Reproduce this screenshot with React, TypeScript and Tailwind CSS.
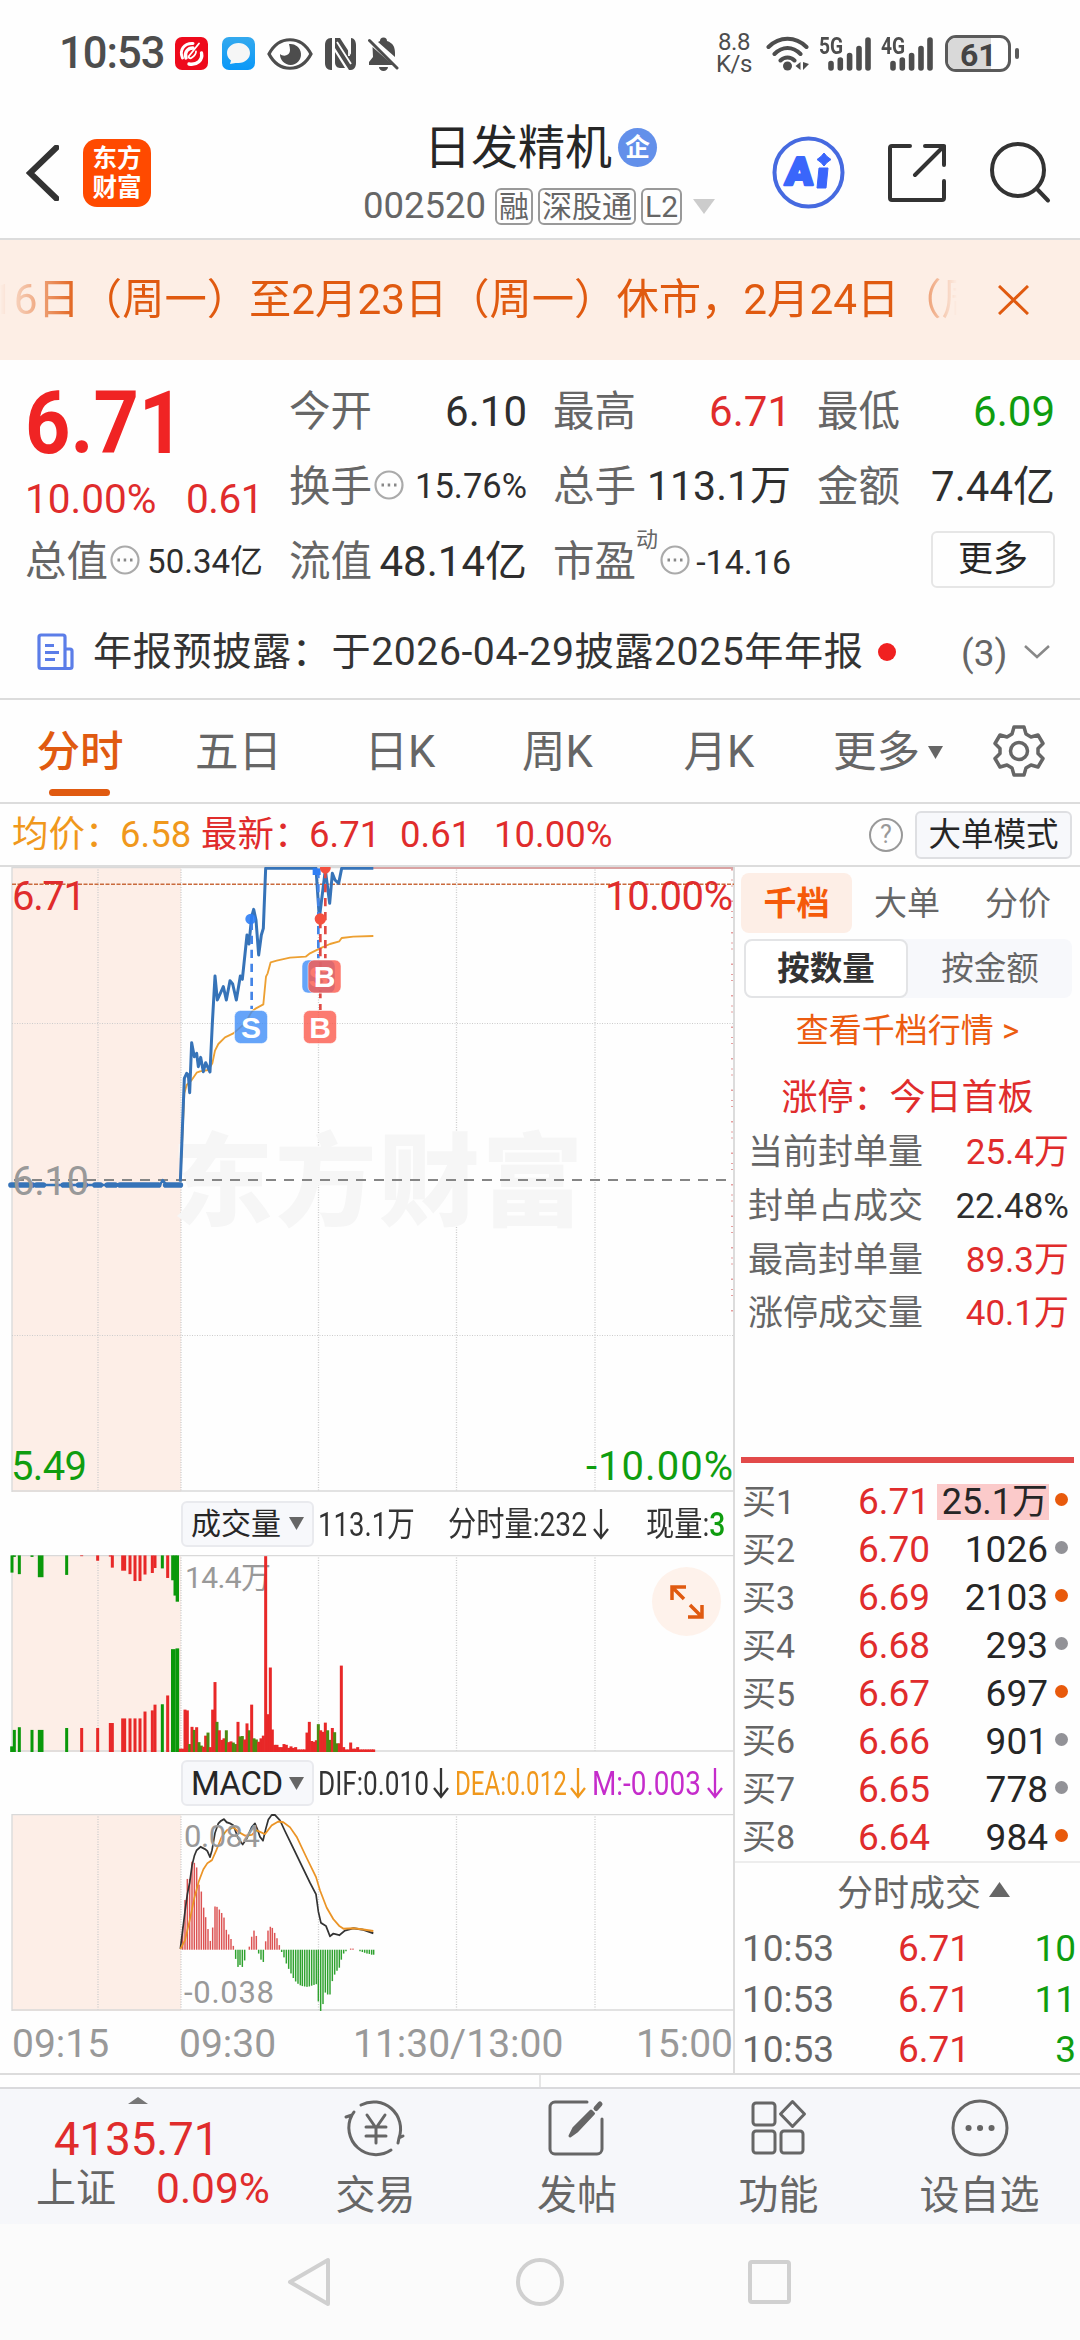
import React, { useState } from 'react';
import clsx from 'clsx';

const RED = '#e02c2c';
const GREEN = '#0f9d0f';
const BLUE = '#3673b8';

type Bar = [x: number, y: number, color: 'r' | 'g', width?: number];

// price line, three units per pixel
const PRICE =
    '541,965 553,655 560,640 565,645 569,698 575,548 583,590 590,580 595,620 602,592 610,635 617,608 630,636 637,490 645,348 652,420 670,380 679,420 690,362 698,372 709,420 721,348 727,358 741,225 747,252 755,170 761,148 768,180 776,285 784,225 790,205 797,25 948,25 958,175 976,30 989,130 997,40 1005,60 1016,70 1025,25 1120,25';
const AVERAGE =
    '541,965 553,700 560,675 575,660 590,638 600,634 625,630 637,610 645,572 655,552 675,532 700,520 735,490 755,455 768,445 790,433 798,350 803,340 812,307 830,302 870,293 917,290 930,280 960,265 990,252 1018,244 1025,234 1060,230 1120,228';

const DIF =
    '541,1228 555,1130 562,1085 569,1055 576,1010 583,985 590,970 602,961 615,967 622,972 630,988 636,970 645,925 655,900 663,893 672,889 680,897 690,900 700,905 715,940 728,955 740,940 755,910 765,900 772,915 780,935 789,945 797,915 805,890 815,878 825,878 840,892 855,920 880,965 905,1010 930,1055 948,1085 955,1130 963,1160 978,1168 990,1195 1000,1188 1018,1192 1035,1180 1060,1174 1090,1178 1120,1187';
const DEA =
    '541,1228 555,1205 570,1150 583,1095 597,1050 610,1020 622,1004 636,996 650,968 665,935 680,918 700,910 715,922 735,932 755,930 770,918 795,928 815,905 835,895 850,897 870,910 890,935 920,990 948,1040 960,1075 980,1120 1000,1150 1018,1168 1030,1175 1060,1174 1090,1177 1120,1181';

const AUCTION_BOTTOM: Bar[] = [
    [35, 696, 'g'], [43, 653, 'g'], [58, 646, 'g'], [96, 653, 'g'], [122, 653, 'g', 17], [200, 648, 'g'],
    [245, 648, 'r'], [293, 648, 'r'], [334, 635, 'r', 15], [371, 623, 'r', 15], [390, 623, 'r'], [405, 623, 'r'],
    [420, 623, 'r'], [435, 605, 'r'], [457, 602, 'r'], [465, 587, 'r'], [487, 586, 'g'], [503, 563, 'r'],
    [520, 442, 'g', 14], [532, 440, 'g', 11],
];
const AUCTION_TOP: Bar[] = [
    [36, 242, 'g'], [43, 201, 'g'], [58, 246, 'g'], [96, 201, 'g'], [122, 254, 'g', 17], [200, 248, 'g'],
    [245, 199, 'r'], [293, 211, 'r'], [331, 200, 'r'], [337, 229, 'r'], [371, 237, 'r', 15], [390, 246, 'r'],
    [405, 264, 'r'], [420, 264, 'r'], [435, 247, 'r'], [457, 243, 'r'], [465, 230, 'r'], [487, 231, 'g'],
    [503, 256, 'r'], [518, 262, 'g'], [525, 302, 'g'], [532, 318, 'g', 10],
];
const VOLUME: Bar[] = [
    [541, 702, 'r'], [548, 702, 'r'], [555, 600, 'r'], [562, 602, 'r'], [569, 690, 'g'], [576, 645, 'r'],
    [583, 653, 'g'], [590, 646, 'r'], [597, 685, 'g'], [604, 694, 'g'], [611, 697, 'r'], [617, 668, 'r'],
    [624, 660, 'g'], [631, 698, 'r'], [638, 600, 'r'], [645, 528, 'r'], [651, 632, 'g'], [658, 654, 'r'],
    [665, 679, 'r'], [672, 675, 'r'], [679, 654, 'g'], [686, 685, 'r'], [693, 683, 'r'], [700, 686, 'g'],
    [707, 690, 'g'], [714, 632, 'r'], [720, 670, 'g'], [727, 669, 'g'], [734, 678, 'r'], [741, 636, 'r'],
    [748, 654, 'g'], [755, 587, 'r'], [762, 675, 'g'], [769, 678, 'g'], [776, 684, 'r'], [783, 675, 'r'],
    [790, 668, 'r'], [797, 199, 'r'], [804, 612, 'r'], [811, 490, 'r'], [817, 652, 'r'], [824, 692, 'r'],
    [831, 692, 'r'], [838, 698, 'r'], [845, 698, 'r'], [852, 690, 'r'], [859, 692, 'r'], [866, 700, 'r'],
    [873, 696, 'r'], [880, 700, 'r'], [887, 698, 'r'], [894, 704, 'r'], [901, 704, 'r'], [908, 704, 'r'],
    [914, 704, 'r'], [921, 660, 'r'], [928, 632, 'r'], [935, 682, 'r'], [942, 684, 'r'], [949, 680, 'r'],
    [955, 638, 'g'], [962, 654, 'r'], [969, 658, 'r'], [976, 634, 'r'], [983, 654, 'g'], [990, 679, 'g'],
    [997, 648, 'r'], [1004, 659, 'g'], [1011, 688, 'g'], [1018, 688, 'r'], [1024, 485, 'r'], [1031, 698, 'r'],
    [1038, 704, 'r'], [1045, 704, 'r'], [1052, 686, 'r'], [1059, 702, 'r'], [1066, 702, 'r'], [1073, 698, 'r'],
    [1080, 704, 'r'], [1087, 704, 'r'], [1094, 704, 'r'], [1101, 704, 'r'], [1108, 704, 'r'], [1115, 704, 'r'],
    [1121, 704, 'r'],
];
// histogram, zero line is at 1230
const HISTOGRAM: [number, number][] = [
    [548, 1170], [555, 1100], [562, 1045], [569, 1045], [576, 1000], [583, 1003], [590, 1015], [597, 1060], [604, 1078],
    [611, 1120], [617, 1145], [624, 1176], [631, 1207], [638, 1172], [645, 1117], [651, 1118], [658, 1125], [665, 1134],
    [672, 1146], [679, 1178], [686, 1190], [693, 1202], [700, 1220], [707, 1254], [714, 1275], [720, 1270], [727, 1275],
    [734, 1258], [748, 1222], [755, 1196], [762, 1180], [769, 1194], [776, 1240], [783, 1256], [790, 1262], [797, 1208],
    [804, 1180], [811, 1170], [817, 1173], [824, 1186], [831, 1200], [838, 1218], [845, 1236], [852, 1250], [859, 1266],
    [866, 1280], [873, 1292], [880, 1304], [887, 1313], [894, 1319], [901, 1323], [907, 1325], [914, 1326], [921, 1327],
    [928, 1326], [935, 1324], [942, 1322], [949, 1320], [955, 1365], [962, 1390], [969, 1372], [976, 1342], [983, 1347],
    [990, 1347], [997, 1312], [1004, 1295], [1011, 1285], [1018, 1277], [1024, 1256], [1031, 1240], [1038, 1234],
    [1052, 1227], [1059, 1227], [1080, 1234], [1087, 1236], [1094, 1238], [1101, 1240], [1108, 1241], [1115, 1243],
    [1121, 1243],
];

const BIDS = [
    { label: '买1', price: '6.71', volume: '25.1万', hot: true },
    { label: '买2', price: '6.70', volume: '1026', hot: false },
    { label: '买3', price: '6.69', volume: '2103', hot: true },
    { label: '买4', price: '6.68', volume: '293', hot: false },
    { label: '买5', price: '6.67', volume: '697', hot: true },
    { label: '买6', price: '6.66', volume: '901', hot: false },
    { label: '买7', price: '6.65', volume: '778', hot: false },
    { label: '买8', price: '6.64', volume: '984', hot: true },
];

const Signal = () => (
    <svg width="43" height="34" viewBox="0 0 43 34" stroke="#4d4d4d" strokeWidth="5.6" strokeLinecap="round">
        <path d="M3 26.500v4.500M12.300 23v8M21.600 18.500v12.500M31 11.500v19.500M40 3v28" />
    </svg>
);

const StatusBar = () => (
    <div className="flex h-[107px] items-center pl-[59px] text-[#4d4d4d]">
        <div className="w-[116px] text-[43.500px] font-medium tracking-[-1px]">10:53</div>
        <svg className="mr-3.5" width="33" height="33" viewBox="0 0 33 33">
            <rect width="33" height="33" rx="7" fill="#ee0a1c" />
            <g fill="none" stroke="#fff" strokeLinecap="round">
                <path d="M7.500 21C4 13 9 6 18 6.500" strokeWidth="3" />
                <path d="M11 21c-2-6 2-10 7-10M14 27c8 1.500 14-4 12.500-11" strokeWidth="3.400" />
                <path d="M24 6.500 14 19c-1 2 1 3 3 1.500 3-2 4-5 4-6" strokeWidth="1.800" />
            </g>
        </svg>
        <svg className="mr-3" width="33" height="33" viewBox="0 0 33 33">
            <defs>
                <linearGradient id="msg" x2="0" y2="1">
                    <stop stopColor="#34a9ee" />
                    <stop offset="1" stopColor="#0a98f8" />
                </linearGradient>
            </defs>
            <rect width="33" height="33" rx="7" fill="url(#msg)" />
            <path d="M16.500 6C23 6 28 10.500 28 16s-5 10-11.500 10h-3L8 27l1-3.500C6.500 21.500 5 19 5 16 5 10.500 10 6 16.500 6Z" fill="#f6f6f6" />
        </svg>
        <svg className="mr-3" width="46" height="32" viewBox="0 0 46 32">
            <path d="M2 16C12-3 34-3 44 16 34 35 12 35 2 16Z" fill="none" stroke="#4d4d4d" strokeWidth="3.200" />
            <path d="M22 6a10.500 10.500 0 1 1-9 10c3 3 10 2 10-4 0-2-.5-4-1-6Z" fill="#4d4d4d" />
        </svg>
        <svg className="mr-3" width="31" height="32" viewBox="0 0 31 32">
            <path d="M6 0h1v32H6c-4 0-6-3-6-7V7c0-4 2-7 6-7ZM10 0h5l11 17V0c3 0 5 3 5 7v18c0 4-2 7-5 7h-2L10 10Z" fill="#4d4d4d" />
            <path d="M10 14l10 16h-4c-3 0-6-1-6-6Z" fill="#4d4d4d" />
            <path d="M9 2v28M12 4l14 22M24 4v14" stroke="#fff" strokeWidth="1.800" />
        </svg>
        <svg width="31" height="34" viewBox="0 0 31 34" fill="#4d4d4d">
            <path d="M12 4a3.500 3.500 0 0 1 7 0c6 2 8 6 8 12v4L10 5Z" />
            <path d="M4.500 10 25 28H1v-3l4-5Z" />
            <path d="M1.500 3.500 29 31" stroke="#4d4d4d" strokeWidth="3" strokeLinecap="round" />
            <path d="M11 30h9a4.500 4 0 0 1-9 0Z" />
        </svg>

        <div className="mr-2 ml-[311px] w-[48px] text-center text-[24px] leading-[21.500px]! tracking-[-0.5px]">
            8.8
            <br />
            K/s
        </div>
        <svg width="44" height="36" viewBox="0 0 44 36" fill="none" stroke="#4d4d4d" strokeWidth="4" strokeLinecap="round">
            <path d="M2.500 11c11-11 27-11 38 0M8.500 18c8-8 18-8 26 0M14.500 24.500c4-4 10-4 14 0" />
            <circle cx="21.500" cy="30" r="4.500" fill="#4d4d4d" stroke="none" />
            <path d="M34.500 26v8l-5-4ZM37 26v8l6-6Z" fill="#4d4d4d" stroke="none" />
        </svg>
        <div className="relative ml-[18px]">
            <Signal />
            <span className="absolute -top-[3px] -left-[9px] origin-left scale-x-[0.8] text-[24px] font-bold">5G</span>
        </div>
        <div className="relative ml-[19px]">
            <Signal />
            <span className="absolute -top-[3px] -left-[9px] origin-left scale-x-[0.8] text-[24px] font-bold">4G</span>
        </div>
        <div className="relative ml-3 h-[37px] w-[66px] overflow-hidden rounded-[11px] border-[3px] border-[#5a5a5a] bg-white">
            <div className="flex h-full w-[43px] bg-[#d9d9d9]" />
            <span className="absolute top-px left-[12px] text-[32px] font-bold text-[#444]">61</span>
        </div>
        <div className="ml-1 h-[11px] w-1 rounded-sm bg-[#5a5a5a]" />
    </div>
);

const Tag = ({ children }: { children: React.ReactNode }) => (
    <span className="flex h-[37px] items-center rounded-md border-2 border-[#999] px-0.5 text-[30px] text-[#666]">{children}</span>
);

const Header = () => (
    <div className="flex h-[133px] items-center border-b-2 border-[#dcdcdc]">
        <svg className="ml-[26px] mr-6" width="33" height="56" viewBox="0 0 33 56" fill="none" stroke="#333" strokeWidth="6">
            <path d="M30.500 2.500 4 28l26.500 25.500" strokeLinecap="round" />
        </svg>
        <div className="flex h-[68px] w-[68px] flex-col items-center justify-center rounded-[14px] bg-[#ff4a00] text-[24.500px] leading-[29px]! font-bold text-white">
            <span>东方</span>
            <span>财富</span>
        </div>
        <div className="ml-[212px] flex w-[352px] flex-col pt-3">
            <div className="flex h-[54px] items-center pl-[61px] text-[47px] text-[#262626]">
                日发精机
                <span className="ml-1.5 flex h-[39px] w-[39px] items-center justify-center rounded-full bg-[#6390ea] text-[25px] font-bold text-white">企</span>
            </div>
            <div className="mt-0.5 flex h-[60px] items-center gap-[5px] text-[36.500px] text-[#666]">
                <span className="w-[127px]">002520</span>
                <Tag>融</Tag>
                <Tag>深股通</Tag>
                <Tag>L2</Tag>
                <svg className="ml-1.5" width="22" height="15" viewBox="0 0 22 15">
                    <path d="M0 0h22L11 15Z" fill="#ccc" />
                </svg>
            </div>
        </div>
        <svg className="ml-[57px]" width="73" height="73" viewBox="0 0 73 73">
            <circle cx="36.500" cy="36.500" r="34" fill="none" stroke="#466ae0" strokeWidth="4" />
            <g transform="translate(3 0) skewX(-4)">
                <text x="13" y="49" fontSize="39" fontWeight="900" fill="#3a66fb" stroke="#3a66fb" strokeWidth="2.500" strokeLinejoin="round" textLength="28" lengthAdjust="spacingAndGlyphs">A</text>
            </g>
            <path d="M47 32h9l-2 20h-9ZM52 17l3 3.500 4 3-4 3-3 3.500-3-3.500-4-3 4-3Z" fill="#3a66fb" stroke="#3a66fb" strokeLinejoin="round" />
        </svg>
        <svg className="ml-[43px]" width="58" height="60" viewBox="0 0 58 60" fill="none" stroke="#333" strokeWidth="4" strokeLinecap="round" strokeLinejoin="round">
            <path d="M22 3H4a2 2 0 0 0-2 2v50a2 2 0 0 0 2 2h50a2 2 0 0 0 2-2V38M37 3h19v19M56 3 27 32" />
        </svg>
        <svg className="ml-11" width="62" height="62" viewBox="0 0 62 62" fill="none" stroke="#333" strokeWidth="4" strokeLinecap="round">
            <circle cx="28" cy="28" r="26" />
            <path d="m47 47 11 11.500" />
        </svg>
    </div>
);

const Notice = () => (
    <div className="flex h-[120px] items-center bg-[#fdeee5] text-[#e05a10]">
        <div className="w-[957px] overflow-hidden py-3 whitespace-nowrap text-[42.300px] [mask-image:linear-gradient(to_right,transparent,#000_80px,#000_900px,transparent)]">
            <span className="-ml-[10px]">16日（周一）至2月23日（周一）休市，2月24日（周二）</span>
        </div>
        <svg className="ml-[41px]" width="31" height="30" viewBox="0 0 31 30" stroke="#e05a10" strokeWidth="3">
            <path d="m1 1 29 28M30 1 1 29" />
        </svg>
    </div>
);

const Dots = () => (
    <svg width="30" height="30" viewBox="0 0 30 30" className="-mt-1 ml-0.5 shrink-0">
        <circle cx="15" cy="15" r="13.500" fill="none" stroke="#aaa" strokeWidth="2.200" />
        <path d="M7.500 15h2.500M13.700 15h2.500M20 15h2.500" stroke="#888" strokeWidth="2.800" />
    </svg>
);

const Cell = ({ label, value, dots, sup, tone = 'text-[#2e2e2e]', size = 'text-[42px]' }: { label: string; value: string; dots?: boolean; sup?: string; tone?: string; size?: string }) => (
    <div className="flex items-center whitespace-nowrap text-[41.500px] text-[#666]">
        {label}
        {sup && <span className="-mt-11 text-[22px]">{sup}</span>}
        {dots && <Dots />}
        <span className={clsx('ml-auto', tone, size)}>{value}</span>
    </div>
);

const Quote = () => (
    <div className="grid h-[245px] auto-rows-[75px] grid-cols-4 gap-x-[26px] px-[25px] pt-3.5">
        <div className="row-span-2 pt-[5px] text-[#e02c2c]">
            <div className="origin-left scale-x-[0.9] text-[88px] font-bold text-[#f02424]">6.71</div>
            <div className="mt-3 flex justify-between text-[40.500px]">
                <span>10.00%</span>
                <span className="tracking-[-0.5px]">0.61</span>
            </div>
        </div>
        <Cell label="今开" value="6.10" />
        <Cell label="最高" value="6.71" tone="text-[#e02c2c]" />
        <Cell label="最低" value="6.09" tone="text-[#0f9d0f]" />
        <Cell label="换手" value="15.76%" dots size="text-[34.500px]" />
        <Cell label="总手" value="113.1万" size="text-[41px]" />
        <Cell label="金额" value="7.44亿" />
        <Cell label="总值" value="50.34亿" dots size="text-[33px]" />
        <Cell label="流值" value="48.14亿" />
        <Cell label="市盈" value="-14.16" sup="动" dots size="text-[34px]" />
        <div className="flex items-center justify-end pb-1">
            <button className="h-[57px] w-[124px] rounded-md border-2 border-[#e6e6e6] text-[35px] text-[#262626]">更多</button>
        </div>
    </div>
);

const Report = () => (
    <div className="flex h-[95px] items-center border-b-2 border-[#dcdcdc] pl-[37px] text-[#333]">
        <svg width="37" height="38" viewBox="0 0 37 38" fill="none" stroke="#5b7de8" strokeWidth="3.200" strokeLinejoin="round">
            <path d="M28 35.500H4a2 2 0 0 1-2-2V4a2 2 0 0 1 2-2h22a2 2 0 0 1 2 2Zm0 0h5a2 2 0 0 0 2-2V18a2 2 0 0 0-2-2h-5M8 12.500h9M8 19.500h14M8 26.500h10" />
        </svg>
        <span className="ml-[19px] w-[785px] pt-[3px] whitespace-nowrap text-[39.200px] tracking-[0.55px]">年报预披露：于2026-04-29披露2025年年报</span>
        <span className="h-[18px] w-[18px] rounded-full bg-[#f02020]" />
        <span className="ml-[65px] pt-[3px] text-[37px] text-[#666]">(3)</span>
        <svg className="ml-[17px]" width="26" height="14" viewBox="0 0 26 14" fill="none" stroke="#888" strokeWidth="2.500">
            <path d="m1 1 12 11L25 1" />
        </svg>
    </div>
);

const TABS = [
    { name: '分时', width: 'w-[160px]' },
    { name: '五日', width: 'w-[157px]' },
    { name: '日K', width: 'w-[166px]' },
    { name: '周K', width: 'w-[149px]' },
    { name: '月K', width: 'w-[174px]' },
];

const Tabs = () => {
    const [active, setActive] = useState('分时');

    return (
        <div className="flex h-[104px] items-center border-b-2 border-[#dcdcdc] text-[43.500px] text-[#666]">
            {TABS.map((tab) => (
                <button
                    key={tab.name}
                    onClick={() => setActive(tab.name)}
                    className={clsx('relative h-full pt-[3px]', tab.width, active === tab.name && 'font-medium text-[#e05a10]')}
                >
                    {tab.name}
                    {active === tab.name && <span className="absolute bottom-1.5 left-[49px] h-[7px] w-[61px] rounded-full bg-[#e05a10]" />}
                </button>
            ))}
            <button className="ml-[27px] flex w-[160px] items-center gap-2 pt-[3px]">
                更多
                <svg width="15" height="13" viewBox="0 0 15 13">
                    <path d="M0 0h15L7.500 13Z" fill="#666" />
                </svg>
            </button>
            <svg width="52" height="52" viewBox="0 0 52 52" fill="none" stroke="#666" strokeWidth="3.500" strokeLinejoin="round">
                <path d="M21 2h10l2 7 5 3 7-2 5 8.500-5 5v5l5 5-5 8.500-7-2-5 3-2 7H21l-2-7-5-3-7 2-5-8.500 5-5v-5l-5-5L7 10l7 2 5-3Z" />
                <circle cx="26" cy="26" r="8.500" />
            </svg>
        </div>
    );
};

const Summary = () => (
    <div className="flex h-[63px] items-center border-b-2 border-[#dcdcdc] pl-3 text-[36.500px] whitespace-nowrap">
        <span className="w-[108px] pt-0.5 text-[#f0981c]">均价：</span>
        <span className="w-[81px] pt-0.5 text-[#f0981c]">6.58</span>
        <span className="w-[108px] pt-0.5 text-[#e02c2c]">最新：</span>
        <span className="w-[91px] pt-0.5 text-[#e02c2c]">6.71</span>
        <span className="w-[94px] pt-0.5 text-[#e02c2c]">0.61</span>
        <span className="pt-0.5 text-[#e02c2c]">10.00%</span>
        <span className="ml-auto flex h-[34px] w-[34px] items-center justify-center rounded-full border-[2.500px] border-[#999] text-[25px] text-[#999]">?</span>
        <button className="mr-2 ml-3 h-[48px] w-[157px] rounded-md border-2 border-[#dedfe2] bg-[#f7f8fb] pt-0.5 text-[32.500px] text-[#262626]">大单模式</button>
    </div>
);

const Grid = ({ y1, y2 }: { y1: number; y2: number }) => (
    <>
        <rect x="12" y={y1} width="169" height={y2 - y1} fill="#fdeee7" />
        {[98, 181, 318.5, 456.5, 595].map((x) => (
            <path key={x} d={`M${x} ${y1}V${y2}`} stroke="#ccc" strokeDasharray="1 1.500" strokeWidth="1.300" />
        ))}
        <path d={`M12 ${y1}V${y2}`} stroke="#ddd" strokeWidth="1.500" />
        <path d={`M12 ${y1 + 0.5}H734M12 ${y2 - 1}H734`} stroke="#d9d9d9" strokeWidth="1.500" />
    </>
);

const Marker = ({ x, y, text }: { x: number; y: number; text: 'B' | 'S' }) => (
    <g>
        <rect x={x} y={y} width="33" height="33" rx="6" fill={text === 'S' ? '#3f8df8' : '#fb5a4c'} fillOpacity="0.8" stroke="#fff" strokeOpacity="0.5" />
        <text x={x + 16.5} y={y + 27} textAnchor="middle" fontFamily="Liberation Sans" fontSize="30" fontWeight="700" fill="#fff">
            {text}
        </text>
    </g>
);

const PriceChart = () => (
    <svg className="block" width="734" height="625" viewBox="0 867 734 625">
        <Grid y1={867} y2={1492} />
        <path d="M12 1023.500H734M12 1335.500H734" stroke="#ccc" strokeDasharray="1 1.500" />
        <text x="172" y="1218" fontSize="101" fontWeight="900" fill="#f6f6f6" textLength="411">东方财富</text>
        <path d="M12 884.300H734" stroke="#c96a3c" strokeWidth="1.400" strokeDasharray="4 1.500" />
        <path d="M14 1180H734" stroke="#858585" strokeWidth="2" strokeDasharray="10 8" />
        <path d="M373 867.800H733" stroke="#d9a3a3" strokeWidth="2.500" />
        <path d="M732 869V1320" stroke="#e6a0a0" strokeDasharray="1.500 9 1 5 1 14" strokeWidth="2" />
        <g transform="translate(0 860) scale(0.33333)" fill="none" strokeLinejoin="round">
            <polyline points={AVERAGE} stroke="#eda032" strokeWidth="5.500" />
            <path d="M33 975h65M110 975h20M190 975h20M236 975h20M285 975h16M322 975h24M360 975h80M448 975h28M497 975h44" stroke={BLUE} strokeWidth="17" strokeLinecap="round" />
            <path d="M33 975H480L488 960 500 975h41" stroke={BLUE} strokeWidth="7" />
            <polyline points={PRICE} stroke={BLUE} strokeWidth="9" />
            <path d="M755 185v262" stroke="#4484e6" strokeWidth="8" strokeDasharray="25 17" />
            <path d="M955 30v265" stroke="#4484e6" strokeWidth="8" strokeDasharray="25 17" />
            <path d="M961 180v270M976 30v265" stroke="#e04a44" strokeWidth="8" strokeDasharray="25 17" />
            <path d="M950 25v20" stroke="#2f7ef5" strokeWidth="24" />
            <circle cx="752" cy="177" r="16" fill="#2f7ef5" fillOpacity="0.9" />
            <circle cx="976" cy="25" r="16" fill="#f4503f" />
            <circle cx="961" cy="177" r="17" fill="#f4503f" />
        </g>
        <Marker x={234.500} y={1010.500} text="S" />
        <Marker x={302} y={960} text="S" />
        <Marker x={308} y={960} text="B" />
        <Marker x={303.500} y={1010.500} text="B" />
        <g fontSize="40">
            <text x="12" y="909.500" fill={RED} textLength="74">6.71</text>
            <text x="12" y="1195" fill="#999" textLength="77">6.10</text>
            <text x="11" y="1480" fill={GREEN} textLength="76">5.49</text>
            <text x="605" y="909.500" fill={RED} textLength="128">10.00%</text>
            <text x="586" y="1480" fill={GREEN} textLength="147">-10.00%</text>
        </g>
    </svg>
);

const VolumeChart = () => {
    const color = (c: 'r' | 'g') => (c === 'r' ? '#e82828' : '#0a980a');

    return (
        <svg className="block" width="734" height="197" viewBox="0 1555 734 197">
            <Grid y1={1555} y2={1752} />
            <text x="185" y="1588" fontSize="30" fill="#999" textLength="86">14.4万</text>
            <g transform="translate(0 1480) scale(0.33333 0.3827)">
                {AUCTION_TOP.map(([x, y, c, w = 9]) => (
                    <rect key={x} x={x - w / 2} y={197} width={w} height={y - 197} fill={color(c)} />
                ))}
                {[...AUCTION_BOTTOM, ...VOLUME].map(([x, y, c, w = 9]) => (
                    <rect key={x} x={x - w / 2} y={y} width={w} height={711 - y} fill={x > 540 && c === 'g' ? '#4b8a10' : color(c)} />
                ))}
            </g>
        </svg>
    );
};

const MacdChart = () => (
    <svg className="block" width="734" height="197" viewBox="0 1815 734 197">
        <Grid y1={1815} y2={2012} />
        <g transform="translate(0 1480) scale(0.33333 0.3827)" fill="none">
            {HISTOGRAM.map(([x, y]) => (
                <rect key={x} x={x - 2.200} y={Math.min(y, 1230)} width="4.400" height={Math.abs(1230 - y)} fill={y < 1230 ? '#dc5353' : '#2fa22f'} />
            ))}
            <polyline points={DIF} stroke="#333" strokeWidth="5" strokeLinejoin="round" />
            <polyline points={DEA} stroke="#eb9426" strokeWidth="5" strokeLinejoin="round" />
        </g>
        <text x="184" y="1848" fontSize="31" fill="#999" textLength="76">0.084</text>
        <text x="184" y="2004" fontSize="31" fill="#999" textLength="90">-0.038</text>
    </svg>
);

const Picker = ({ children }: { children: React.ReactNode }) => (
    <button className="mr-1 ml-[181px] flex h-[46px] w-[133px] shrink-0 items-center justify-between rounded-md border-2 border-[#e9eaee] bg-[#f7f8fb] pr-2 pl-2 text-[#262626]">
        {children}
        <svg width="15" height="13" viewBox="0 0 15 13">
            <path d="M0 0h15L7.500 13Z" fill="#666" />
        </svg>
    </button>
);

const Down = ({ className }: { className: string }) => (
    <svg className={clsx('shrink-0', className)} width="16" height="32" viewBox="0 0 16 32" fill="none" stroke="currentColor" strokeWidth="2.300">
        <path d="M8 1v29M1 21l7 9 7-9" />
    </svg>
);

const ChartColumn = () => (
    <div className="w-[735px] border-r-2 border-[#dcdcdc]">
        <PriceChart />
        <div className="flex h-[63px] items-center text-[34px] whitespace-nowrap text-[#333]">
            <Picker>
                <span className="text-[30px]">成交量</span>
            </Picker>
            <span className="w-[130px] origin-left scale-x-[0.81]">113.1万</span>
            <span className="w-[145px] origin-left scale-x-[0.83]">分时量:232</span>
            <Down className="mr-[37px]" />
            <span className="w-[78px] origin-left scale-x-[0.83]">
                现量:<span className="font-medium text-[#0f9d0f]">3</span>
            </span>
        </div>
        <div className="relative">
            <VolumeChart />
            <button className="absolute top-3 left-[652px] flex h-[69px] w-[69px] items-center justify-center rounded-full bg-[#fef2eb]">
                <svg width="34" height="34" viewBox="0 0 34 34" fill="none" stroke="#e05a10" strokeWidth="3.500">
                    <path d="M2 15V2h14M2 2l12 12M32 20v12H18M32 32 20 20" />
                </svg>
            </button>
        </div>
        <div className="flex h-[62px] items-center text-[34px] whitespace-nowrap text-[#333]">
            <Picker>
                <span className="text-[33px] tracking-[-0.5px]">MACD</span>
            </Picker>
            <span className="w-[115px] origin-left scale-x-[0.77]">DIF:0.010</span>
            <Down className="mr-[6px]" />
            <span className="w-[115px] origin-left scale-x-[0.71] text-[#f0981c]">DEA:0.012</span>
            <Down className="mr-[6px] text-[#f0981c]" />
            <span className="w-[115px] origin-left scale-x-[0.82] text-[#c52ccb]">M:-0.003</span>
            <Down className="text-[#c52ccb]" />
        </div>
        <MacdChart />
        <div className="flex h-[63px] items-center pt-1 pl-[12px] text-[39px] text-[#999]">
            <span className="w-[167px]">09:15</span>
            <span className="w-[174px]">09:30</span>
            <span>11:30/13:00</span>
            <span className="ml-auto">15:00</span>
        </div>
    </div>
);

const STATS = [
    { label: '当前封单量', value: '25.4万', red: true },
    { label: '封单占成交', value: '22.48%', red: false },
    { label: '最高封单量', value: '89.3万', red: true },
    { label: '涨停成交量', value: '40.1万', red: true },
];

const OrderBook = () => (
    <div className="flex w-[345px] flex-col text-[#666]">
        <div className="mt-1.5 ml-1.5 flex h-[60px] text-[33px]">
            <button className="w-[111px] rounded-lg bg-[#fdeee6] pt-0.5 font-bold text-[#f55a0a]">千档</button>
            <button className="w-[110px] pt-0.5">大单</button>
            <button className="w-[112px] pt-0.5">分价</button>
        </div>
        <div className="mt-1.5 mr-2 ml-[9px] flex h-[59px] rounded-lg bg-[#f7f8fb] text-[32.500px]">
            <button className="w-[164px] rounded-lg border-2 border-[#e3e4e6] bg-white pt-0.5 font-bold text-[#333]">按数量</button>
            <button className="w-[164px] pt-0.5">按金额</button>
        </div>
        <div className="mt-[16px] text-center text-[33px] text-[#ec5c10]">查看千档行情 &gt;</div>
        <div className="mt-[33px] mb-2.5 text-center text-[36px] text-[#e02c2c]">涨停：今日首板</div>
        {STATS.map((stat) => (
            <div key={stat.label} className="flex h-[54px] items-center justify-between pr-[11px] pl-[13px] text-[35px]">
                {stat.label}
                <span className={stat.red ? 'text-[#e02c2c]' : 'text-[#2e2e2e]'}>{stat.value}</span>
            </div>
        ))}
        <div className="mt-[116px] mr-1.5 mb-[15px] ml-1.5 h-1.5 bg-[#e24a4a]" />
        {BIDS.map((bid, i) => (
            <div key={bid.label} className="flex h-[48.100px] items-center pl-[7px] text-[37px]">
                <span className="w-[116px] text-[34px]">{bid.label}</span>
                <span className="w-[79px] text-[#e02c2c]">{bid.price}</span>
                <span className={clsx('flex h-9 w-[112px] items-center justify-end pr-px text-[#262626]', i === 0 && 'bg-[#fbcaca] text-[36px]')}>{bid.volume}</span>
                <span className={clsx('mb-1 ml-[6px] h-[13px] w-[13px] rounded-full', bid.hot ? 'bg-[#e85a0c]' : 'bg-[#929297]')} />
            </div>
        ))}
        <div className="flex h-[60px] items-center justify-center gap-2 border-t-2 border-[#ededed] pt-[3px] pl-8 text-[36px]">
            分时成交
            <svg width="21" height="15" viewBox="0 0 21 15" className="mb-2">
                <path d="M0 15h21L10.500 0Z" fill="#666" />
            </svg>
        </div>
        {['10', '11', '3'].map((volume) => (
            <div key={volume} className="flex h-[50.800px] items-center pt-1 pr-1 pl-[7px] text-[37px]">
                <span className="w-[156px]">10:53</span>
                <span className="text-[#e02c2c]">6.71</span>
                <span className="ml-auto text-[#0f9d0f]">{volume}</span>
            </div>
        ))}
    </div>
);

const NavItem = ({ label, width, children }: { label: string; width: string; children: React.ReactNode }) => (
    <button className={clsx('flex flex-col items-center justify-start pt-2.5', width)}>
        <svg width="64" height="58" viewBox="0 0 64 58" fill="none" stroke="#666" strokeWidth="3" strokeLinecap="round" strokeLinejoin="round">
            {children}
        </svg>
        <span className="mt-[19px] text-[40px]">{label}</span>
    </button>
);

const BottomNav = () => (
    <div className="flex h-[135px] bg-[#f6f7fa] text-[#666]">
        <div className="w-[275px]">
            <svg className="mt-2 ml-[128px]" width="20" height="7" viewBox="0 0 20 7">
                <path d="M0 7h20L10 0Z" fill="#777" />
            </svg>
            <div className="mt-[13px] pl-[54px] text-[45.500px] text-[#e02c2c]">4135.71</div>
            <div className="mt-[5px] flex items-center pl-9 text-[40px]">
                上证
                <span className="ml-10 text-[42.500px] text-[#e02c2c]">0.09%</span>
            </div>
        </div>
        <NavItem label="交易" width="w-[201px]">
            <path d="M17 6a27 27 0 0 1 38 33l4-2M55 39l-1 5M47 51A27 27 0 0 1 8 16l-6 2M8 16l2-3" />
            <path d="m23 16 9 13 9-13M32 29v15M22 28h20M22 37h20" />
        </NavItem>
        <NavItem label="发帖" width="w-[202px]">
            <path d="M42 3H10a5 5 0 0 0-5 5v42a5 5 0 0 0 5 5h42a5 5 0 0 0 5-5V20" />
            <path d="m51 9.500 4-4.500" strokeWidth="5" />
            <path d="M25 37l4-8 17-17 2.500 2.500L32 32Z" fill="#666" />
        </NavItem>
        <NavItem label="功能" width="w-[201px]">
            <rect x="6" y="4" width="22" height="22" rx="3" />
            <rect x="6" y="32" width="22" height="22" rx="3" />
            <rect x="34" y="32" width="22" height="22" rx="3" />
            <path d="M45.500 2.500 57.500 15 45.500 27.500 33.500 15Z" />
        </NavItem>
        <NavItem label="设自选" width="w-[201px]">
            <circle cx="32" cy="29" r="27" />
            <path d="M20.500 29h.1M32 29h.1M43.500 29h.1" strokeWidth="6" />
        </NavItem>
    </div>
);

const SystemNav = () => (
    <div className="flex h-[116px] items-center bg-[#fbfbfb] pl-[286px]">
        <svg width="46" height="50" viewBox="0 0 46 50" fill="none" stroke="#d0d0d0" strokeWidth="4" strokeLinejoin="round">
            <path d="M42 3v44L4 25Z" />
        </svg>
        <div className="ml-[184px] h-12 w-12 rounded-full border-4 border-[#d0d0d0]" />
        <div className="ml-[184px] h-11 w-[43px] rounded-sm border-4 border-[#d0d0d0]" />
    </div>
);

const App = () => {
    return (
        <div className="h-[2340px] w-[1080px] overflow-hidden bg-[#fefefe] font-['Roboto','Noto_Sans_CJK_SC',sans-serif] leading-none [&_[class*=text]]:leading-[1]">
            <StatusBar />
            <Header />
            <Notice />
            <Quote />
            <Report />
            <Tabs />
            <Summary />
            <div className="flex h-[1208px] border-b-2 border-[#dcdcdc]">
                <ChartColumn />
                <OrderBook />
            </div>
            <div className="flex h-[14px] border-b-2 border-[#d9d9dc]">
                <div className="w-[541px] border-r-2 border-[#e6e6e6]" />
            </div>
            <BottomNav />
            <SystemNav />
        </div>
    );
};

export default App;
